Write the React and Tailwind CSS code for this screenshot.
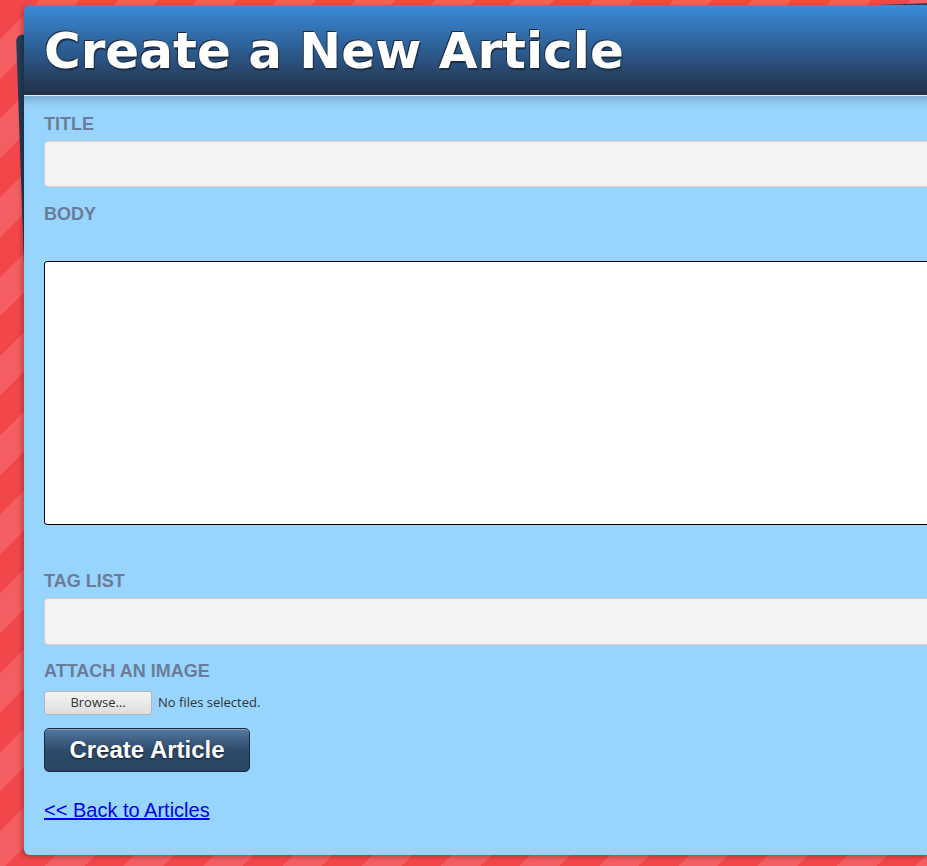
export default function App() {
  const label = 'block text-[18px] leading-[22px] font-bold uppercase text-[#6b7c99]'
  const field = 'block w-full rounded-[4px] border border-[#e2c9c6] bg-[#f3f3f3]'

  return (
    <div
      className="relative h-[866px] w-[927px] overflow-hidden bg-[repeating-linear-gradient(135deg,#f2474a_0px,#f2474a_28px,#f45e61_28px,#f45e61_56px)]"
      style={{ fontFamily: '"Liberation Sans", Arial, sans-serif' }}
    >
      {/* rotated card peeking out behind */}
      <div className="absolute left-[16px] top-[35px] h-[780px] w-[1000px] origin-top-left rotate-[-2deg] rounded-md bg-gradient-to-b from-[#243d58] to-[#1d2f44]" />

      <div className="relative ml-[24px] mt-[5px] h-[850px] w-[1000px] overflow-hidden rounded-md shadow-[-2px_2px_5px_rgba(0,0,0,0.25)]">
        <div className="h-[90px] bg-gradient-to-b from-[#3b8cd9] via-[#2c5d92] to-[#212f46] pl-[20px] pt-[21px]">
          <h1
            className="text-[50px] leading-[50px] font-bold text-white [text-shadow:-1px_-1px_0_#1b2c42,1px_2px_1px_#1b2c42]"
            style={{ fontFamily: '"DejaVu Sans", Verdana, sans-serif' }}
          >
            Create a New Article
          </h1>
        </div>
        <div className="h-px bg-[#e3ebf1]" />

        <div className="h-[759px] bg-[#97d5fe] pl-[20px] pt-[17px] shadow-[inset_0_10px_10px_-6px_rgba(60,80,100,0.35)]">
          <label className={label}>Title</label>
          <div className={`${field} mt-[6px] h-[46px]`} />

          <label className={`${label} mt-[16px]`}>Body</label>
          <div className="mt-[36px] h-[264px] w-full rounded-[3px] border border-black bg-white" />

          <label className={`${label} mt-[45px]`}>Tag List</label>
          <div className={`${field} mt-[6px] h-[47px]`} />

          <label className={`${label} mt-[15px]`}>Attach an Image</label>
          <div
            className="mt-[9px] flex items-center gap-[6px] text-[13px] text-[#333]"
            style={{ fontFamily: '"Open Sans", sans-serif' }}
          >
            <button className="h-[24px] w-[108px] rounded-[3px] border border-[#b5b5b5] bg-gradient-to-b from-[#f4f4f4] to-[#dedede] text-[13px] text-[#333]">
              Browse…
            </button>
            <span>No files selected.</span>
          </div>

          <button className="mt-[13px] block h-[44px] w-[206px] rounded-[5px] border border-[#1b2a3d] bg-gradient-to-b from-[#5479a0] via-[#2e4b6c] to-[#2a4563] text-[24px] font-bold text-white shadow-[inset_0_1px_0_rgba(255,255,255,0.3)] [text-shadow:0_1px_2px_#0f1d2e]">
            Create Article
          </button>

          <a href="#" className="mt-[26px] inline-block text-[20px] leading-[24px] text-[#0000ee] underline">
            &lt;&lt; Back to Articles
          </a>
        </div>
      </div>
    </div>
  )
}
